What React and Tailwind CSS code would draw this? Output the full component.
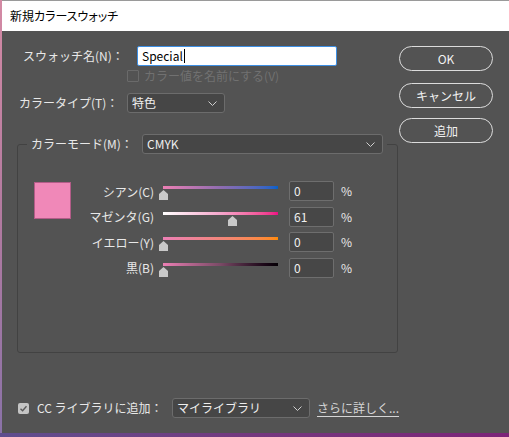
import React from "react";

const FONT = { fontFamily: '"Noto Sans CJK JP", "Noto Sans", sans-serif' };

function Chevron() {
  return (
    <svg width="9" height="5" viewBox="0 0 9 5" className="shrink-0">
      <path d="M0.5 0.5 L4.5 4.5 L8.5 0.5" fill="none" stroke="#cfcfcf" strokeWidth="1" />
    </svg>
  );
}

function Select({ text, w }) {
  return (
    <div
      className={`${w} h-[20px] flex items-center justify-between pl-[4px] pr-[7px] bg-[#464646] border border-[#6c6c6c] rounded-[3px] text-[12px] text-[#eeeeee] leading-none`}
    >
      <span>{text}</span>
      <Chevron />
    </div>
  );
}

function Thumb({ pct }) {
  return (
    <svg
      width="9"
      height="10"
      viewBox="0 0 9 10"
      className="absolute top-[9px]"
      style={{ left: `${pct * 115 - 4.5}px` }}
    >
      <polygon points="4.5,0 9,4 9,10 0,10 0,4" fill="#c9c9c9" />
    </svg>
  );
}

function SliderRow({ label, grad, pct, value }) {
  return (
    <div className="flex items-center h-[20px]">
      <div className="w-[83px] text-right text-[12px] text-[#e8e8e8] leading-none pt-[1px] whitespace-nowrap">{label}</div>
      <div className="relative ml-[9px] w-[115px] h-[20px] pt-[5px]">
        <div className={`h-[3px] ${grad}`} />
        <Thumb pct={pct} />
      </div>
      <div className="ml-[11px] w-[45px] h-[20px] flex items-center pl-[4px] bg-[#474747] border border-[#6e6e6e] rounded-[2px] text-[12px] text-[#f0f0f0] leading-none">
        {value}
      </div>
      <div className="ml-[7px] text-[12px] text-[#e8e8e8] leading-none">%</div>
    </div>
  );
}

function PillButton({ children, className = "" }) {
  return (
    <div
      className={`h-[25px] w-[94px] flex items-center justify-center rounded-full border-[1.5px] border-[#dcdcdc] text-[12px] text-[#f2f2f2] leading-none ${className}`}
    >
      {children}
    </div>
  );
}

export default function App() {
  return (
    <div className="w-[509px] h-[437px] flex flex-col overflow-hidden" style={FONT}>
      <div className="flex h-[433px]">
        <div className="w-[2px] h-full bg-gradient-to-b from-[#d48aa4] via-[#b27aa0] to-[#8a72a8]" />
        <div className="flex-1 flex flex-col">
          {/* title bar */}
          <div className="h-[31px] bg-white border-t border-[#9a9a9a] flex items-center pl-[8px] text-[12px] text-black leading-none [font-feature-settings:'palt']">
            新規カラースウォッチ
          </div>
          {/* body */}
          <div className="flex-1 bg-[#535353] flex flex-col">
            <div className="flex">
              {/* left column */}
              <div className="w-[397px] flex flex-col pt-[15px]">
                <div className="flex items-center h-[20px]">
                  <div className="ml-[21px] w-[114px] text-[12px] text-[#e8e8e8] leading-none whitespace-nowrap">スウォッチ名(N)：</div>
                  <div className="w-[200px] h-[20px] flex items-center pl-[4px] bg-white border-[1.5px] border-[#3d8fe4] rounded-[2px] text-[12px] text-black leading-none">
                    Special
                    <span className="inline-block w-[1px] h-[14px] bg-black ml-[1px]" />
                  </div>
                </div>
                <div className="flex items-center mt-[4px] ml-[125px] h-[12px]">
                  <div className="w-[12px] h-[12px] border border-[#6a6a6a] rounded-[1px]" />
                  <div className="ml-[5px] text-[12px] text-[#717171] leading-none whitespace-nowrap">カラー値を名前にする(V)</div>
                </div>
                <div className="flex items-center mt-[11px] h-[20px]">
                  <div className="ml-[17px] w-[108px] text-[12px] text-[#e8e8e8] leading-none whitespace-nowrap">カラータイプ(T)：</div>
                  <Select text="特色" w="w-[98px]" />
                </div>

                <fieldset className="mt-[21px] ml-[15px] w-[381px] border border-[#424242] rounded-[3px]">
                  <legend className="ml-[9px] px-[4px] flex items-center h-[20px]">
                    <div className="w-[111px] text-[12px] text-[#e8e8e8] leading-none whitespace-nowrap">カラーモード(M)：</div>
                    <Select text="CMYK" w="w-[241px]" />
                  </legend>
                  <div className="h-[198px] flex items-start pt-[28px]">
                    <div className="ml-[16px] w-[37px] h-[37px] bg-[#f088b8] border border-[#b35c88]" />
                    <div className="flex flex-col gap-[5.66px] mt-[-1px]">
                      <SliderRow label="シアン(C)" grad="bg-gradient-to-r from-[#ec7fb4] via-[#8f6cb0] to-[#0060c8]" pct={0} value="0" />
                      <SliderRow label="マゼンタ(G)" grad="bg-gradient-to-r from-[#ffffff] via-[#f4a6cc] to-[#ec0a84]" pct={0.6} value="61" />
                      <SliderRow label="イエロー(Y)" grad="bg-gradient-to-r from-[#ec7fb4] via-[#f2857a] to-[#ff8a00]" pct={0} value="0" />
                      <SliderRow label="黒(B)" grad="bg-gradient-to-r from-[#ec7fb4] via-[#7a4a66] to-[#050005]" pct={0} value="0" />
                    </div>
                  </div>
                </fieldset>
              </div>
              {/* buttons */}
              <div className="flex flex-col pt-[15px]">
                <PillButton>OK</PillButton>
                <PillButton className="mt-[12px]">キャンセル</PillButton>
                <PillButton className="mt-[10px]">追加</PillButton>
              </div>
            </div>

            {/* bottom row */}
            <div className="flex items-center mt-[45px] h-[20px]">
              <div className="ml-[16px] w-[11px] h-[11px] bg-[#c4c4c4] rounded-[2px] flex items-center justify-center">
                <svg width="9" height="9" viewBox="0 0 9 9">
                  <path d="M1.5 4.8 L3.6 6.8 L7.5 2.2" fill="none" stroke="#5a5a5a" strokeWidth="1.4" />
                </svg>
              </div>
              <div className="ml-[8px] w-[135px] text-[12px] text-[#e8e8e8] leading-none whitespace-nowrap">CC ライブラリに追加：</div>
              <Select text="マイライブラリ" w="w-[138px]" />
              <div className="ml-[7px] text-[12px] text-[#d6d6d6] leading-none underline underline-offset-[3px] whitespace-nowrap">さらに詳しく...</div>
            </div>
          </div>
        </div>
      </div>
      <div className="h-[4px] bg-gradient-to-r from-[#5e4e8e] via-[#74387e] to-[#7c2478]" />
    </div>
  );
}
